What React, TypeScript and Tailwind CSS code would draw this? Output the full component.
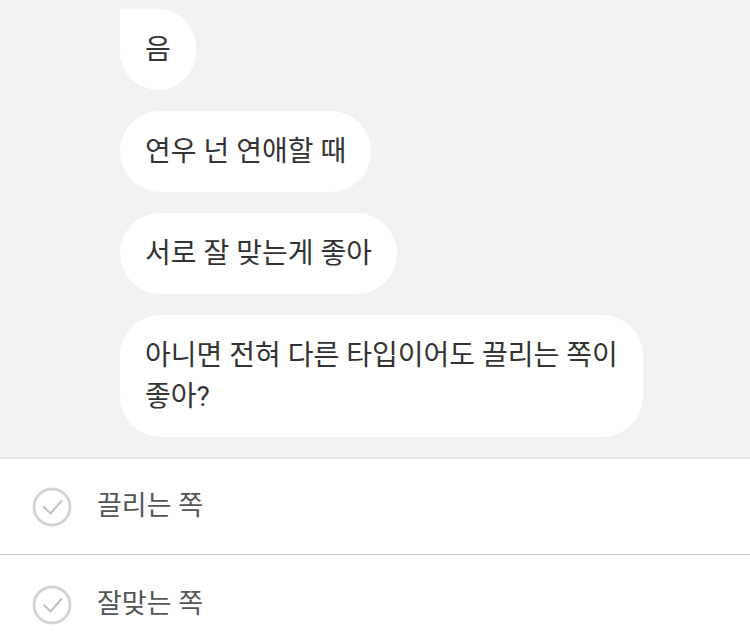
const font = {
  fontFamily: 'Roboto, "Noto Sans CJK KR", sans-serif',
  fontFeatureSettings: '"palt"',
};

function Bubble({ children, first }: { children: React.ReactNode; first?: boolean }) {
  return (
    <div
      className={
        "w-fit bg-white px-[25px] py-5 text-[28px] leading-[41px] text-[#333] rounded-[41px]" +
        (first ? " rounded-tl-none" : "")
      }
    >
      {children}
    </div>
  );
}

function CheckCircle() {
  return (
    <svg width="40" height="40" viewBox="0 0 40 40" fill="none">
      <circle cx="20" cy="20" r="18" stroke="#d2d2d2" strokeWidth="2.8" />
      <path d="M12 20l6.5 6.5L29.5 14" stroke="#c2c2c2" strokeWidth="2" strokeLinecap="round" strokeLinejoin="round" />
    </svg>
  );
}

function Option({ label, last }: { label: string; last?: boolean }) {
  return (
    <div
      className={
        "flex h-[96px] items-center gap-[25px] pl-[32px]" +
        (last ? " pt-[3px]" : " border-b border-[#cccccc]")
      }
    >
      <CheckCircle />
      <span className="text-[27px] text-[#555]">{label}</span>
    </div>
  );
}

export default function App() {
  return (
    <div className="h-[644px] w-[750px] overflow-hidden bg-white" style={font}>
      <div className="flex h-[457px] flex-col gap-[21px] bg-[#f2f2f2] pb-5 pl-[120px] pt-[9px]">
        <Bubble first>음</Bubble>
        <Bubble>연우 넌 연애할 때</Bubble>
        <Bubble>서로 잘 맞는게 좋아</Bubble>
        <Bubble>
          아니면 전혀 다른 타입이어도 끌리는 쪽이
          <br />
          좋아?
        </Bubble>
      </div>
      <div className="border-t-2 border-[#e6e6e6]">
        <Option label="끌리는 쪽" />
        <Option label="잘맞는 쪽" last />
      </div>
    </div>
  );
}
